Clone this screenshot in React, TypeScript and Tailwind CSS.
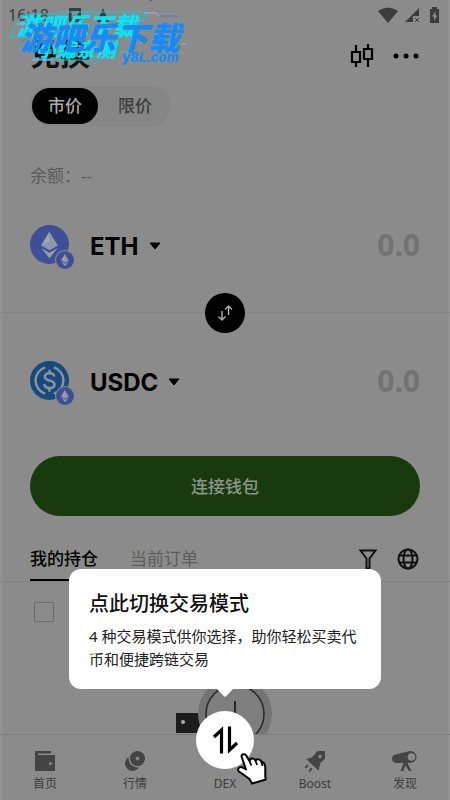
import { useState } from 'react'
import type { ReactNode } from 'react'

interface Token {
  symbol: string
  icon: ReactNode
}

interface NavItem {
  label: string
  icon: ReactNode
}

function EthIcon({ className }: { className?: string }) {
  return (
    <svg viewBox="0 0 40 40" className={className} aria-hidden="true">
      <circle cx="20" cy="20" r="20" fill="#3e4f97" />
      <path d="M20 7 11.5 21 20 26l8.500-5z" fill="#8f95ab" />
      <path d="M20 7v10.500L11.500 21z" fill="#a0a4b4" />
      <path d="m11.500 23.500 8.500 5 8.500-5L20 34z" fill="#969bb0" />
    </svg>
  )
}

function UsdcIcon({ className }: { className?: string }) {
  return (
    <svg viewBox="0 0 40 40" className={className} aria-hidden="true">
      <circle cx="20" cy="20" r="20" fill="#164a7d" />
      <g fill="none" stroke="#8f9499" strokeWidth="2.500">
        <path d="M15.500 6.500a14.200 14.200 0 0 0 0 27" />
        <path d="M24.500 6.500a14.200 14.200 0 0 1 0 27" />
        <path d="M25 16c-.4-2.300-2.400-3.500-5-3.500-3 0-4.800 1.500-4.800 3.700 0 5.300 10 2.500 10 7.800 0 2.300-2.300 3.700-5.200 3.700-3.100 0-5.200-1.400-5.400-4" />
        <path d="M20 9v4M20 27.500v4" />
      </g>
    </svg>
  )
}

const tokens: Token[] = [
  { symbol: 'ETH', icon: <EthIcon className="size-[39px]" /> },
  { symbol: 'USDC', icon: <UsdcIcon className="size-[39px]" /> },
]

const navItems: NavItem[] = [
  {
    label: '首页',
    icon: (
      <svg viewBox="0 0 24 24" className="size-6" fill="#444">
        <path d="M2 2h16v2.500H5V6h17v16H2z" />
        <circle cx="17.500" cy="14.500" r="1.500" fill="#8b8b8b" />
      </svg>
    ),
  },
  {
    label: '行情',
    icon: (
      <svg viewBox="0 0 24 24" className="size-6" fill="#444">
        <circle cx="9.500" cy="14.500" r="7.500" />
        <circle cx="14.500" cy="9.500" r="9" fill="#8b8b8b" />
        <circle cx="14.500" cy="9.500" r="7.500" />
        <path d="m14.500 7.300 2.200 2.200-2.200 2.200-2.200-2.200z" fill="#8b8b8b" />
      </svg>
    ),
  },
  { label: 'DEX', icon: <span className="block size-6" /> },
  {
    label: 'Boost',
    icon: (
      <svg viewBox="0 0 24 24" className="size-6" fill="#444">
        <path d="M14.500 2H22v7.500l-4.500 4.500-2 7.500L3 10l6-1.500z" />
        <circle cx="17" cy="7.500" r="1.700" fill="#8b8b8b" />
        <path d="m1.500 18.500 2.500-3 1.500 1.500-2.500 2.500zM5.500 22l2.500-3.500 1.500 1.500L7 23z" />
      </svg>
    ),
  },
  {
    label: '发现',
    icon: (
      <svg viewBox="0 0 26 24" className="h-6 w-[26px]" fill="#444">
        <path d="M3.500 5.500 17 2.300a5.900 5.900 0 1 1 2.500 11.500L4.500 14A4.300 4.300 0 0 1 3.500 5.500z" />
        <circle cx="19.500" cy="8" r="3.800" fill="#8b8b8b" />
        <path d="m12 13-3.500 9h2.800l2.200-5.500 3.500 5.500h2.500l-4.500-9z" />
      </svg>
    ),
  },
]

function StatusBar() {
  return (
    <div className="flex h-7 items-center px-1.5 pt-0.5 text-[#3c3c3c]">
      <span className="w-[60px] text-base">16:18</span>
      <svg viewBox="0 0 42 16" className="h-4 w-[42px]" fill="currentColor">
        <path d="M1 1h12v14H1zm2.500 3v8l2.500-4 2 4 3-8z" fillRule="evenodd" />
        <path d="M35 1 29 15h3.500l2.500-5 2.500 5H41z" />
      </svg>
      <div className="ml-auto flex items-center gap-1.5">
        <svg viewBox="0 0 20 16" className="h-4 w-5" fill="currentColor">
          <path d="M0 4Q10-3 20 4L10 16z" />
        </svg>
        <svg viewBox="0 0 16 16" className="size-4" fill="currentColor">
          <path d="M15 1v8H9v6H1z" />
          <path d="m11 11 4 4m0-4-4 4" stroke="currentColor" />
        </svg>
        <svg viewBox="0 0 16 18" className="h-[18px] w-4" fill="currentColor">
          <path d="M6 1h5v2h2v14H4V3h2zm3.500 4L6 10.500h2V15l3.500-5.500h-2z" fillRule="evenodd" />
        </svg>
      </div>
    </div>
  )
}

// Site stamp laid over the top left corner of the page
function SiteStamp() {
  return (
    <div className="pointer-events-none absolute left-0 top-0 h-20 w-[200px] font-black italic">
      <svg viewBox="0 0 200 80" className="absolute inset-0 h-20 w-[200px]" fill="none" strokeWidth="1">
        <path d="M17 19l5-5h34l3-2h87l-5 9h-5M17 19l-9 18h18l6 5v17h18M118 52h7l5-10-7-5M96 60l-3 4-4-4H40" stroke="#08cfe0" />
        <path d="M142 13h12l3 3M15 24h10M180 44h4M30 60h20" stroke="#b9a8f0" />
        <path d="M158 16h18M176 38l5-8M20 42l4-3" stroke="#5c6ad0" />
        <path d="M148 0h2" stroke="#222" />
      </svg>
      <span className="absolute left-[15px] top-3 whitespace-nowrap text-2xl/7 text-[#00e6fa]">游吧乐下载</span>
      <span className="absolute left-[34px] top-[38px] whitespace-nowrap text-xl/6 text-[#00e6fa]">小编亲测</span>
      <span className="absolute left-[18px] top-5 whitespace-nowrap text-[32px]/9 text-[#168bf6]">游吧乐下载</span>
      <span className="absolute left-[120px] top-[49px] font-['Inter'] text-[13px]/4 font-extrabold text-[#168df5]">y8L.com</span>
    </div>
  )
}

function TokenRow({ token, amount, onChange }: { token: Token; amount: string; onChange: (value: string) => void }) {
  return (
    <div className="flex h-[135px] items-center px-[30px]">
      <button type="button" className="flex items-center">
        <span className="relative mr-[21px] block size-[39px]">
          {token.icon}
          <span className="absolute -bottom-1.5 -right-1.5 rounded-full bg-[#8b8b8b] p-px">
            <EthIcon className="size-[18px]" />
          </span>
        </span>
        <span className="pt-1 font-['Inter'] text-2xl font-bold text-black">{token.symbol}</span>
        <svg viewBox="0 0 12 8" className="ml-2.5 mt-0.5 h-2 w-3">
          <path d="M1 1h10L6 7z" fill="#000" stroke="#000" strokeLinejoin="round" />
        </svg>
      </button>
      <input
        aria-label={`${token.symbol} 数量`}
        inputMode="decimal"
        placeholder="0.0"
        value={amount}
        onChange={(event) => onChange(event.target.value)}
        className="ml-auto w-0 min-w-0 flex-1 bg-transparent text-right font-['Noto_Sans'] text-3xl font-bold text-[#222] outline-none placeholder:text-[#737373]"
      />
    </div>
  )
}

function EmptyIllustration() {
  return (
    <svg viewBox="0 0 98 62" className="ml-[174px] h-[62px] w-[98px] shrink-0">
      <path d="M2 28h34v18H2z" fill="#1c1c1c" />
      <path d="M2 47h34" stroke="#1c1c1c" strokeWidth="2" />
      <circle cx="9" cy="37" r="2" fill="#aaa" />
      <circle cx="61" cy="29" r="37" fill="#747474" />
      <circle cx="61" cy="29" r="29" fill="#7e7e7e" stroke="#282828" strokeWidth="1.500" />
      <path d="M61 16v14" stroke="#282828" strokeWidth="2" />
    </svg>
  )
}

export default function App() {
  const [mode, setMode] = useState('市价')
  const [activeTab, setActiveTab] = useState('我的持仓')
  const [amounts, setAmounts] = useState(['', ''])

  const setAmount = (index: number, value: string) => {
    setAmounts(amounts.map((amount, i) => (i === index ? value : amount)))
  }

  return (
    <div className="relative flex min-h-screen flex-col border-x-2 border-[#929292] bg-[#8b8b8b] font-['Noto_Sans','Noto_Sans_CJK_SC',sans-serif] text-[17px]/6">
      <StatusBar />

      <header className="flex h-14 items-center justify-between px-7">
        <h1 className="pb-1 text-3xl font-bold text-[#111]">兑换</h1>
        <div className="flex items-center gap-[18px]">
          <button type="button" aria-label="K线">
            <svg viewBox="0 0 24 26" className="h-[26px] w-6" fill="none" stroke="#000" strokeWidth="2.200">
              <path d="M2 9h8v10H2zM14 6h8v10h-8zM6 2v7M6 19v5M18 1v5M18 16v8" />
            </svg>
          </button>
          <button type="button" aria-label="更多">
            <svg viewBox="0 0 28 8" className="h-2 w-7">
              <circle cx="4" cy="4" r="2.500" />
              <circle cx="14" cy="4" r="2.500" />
              <circle cx="24" cy="4" r="2.500" />
            </svg>
          </button>
        </div>
      </header>

      <div className="mx-7 mt-0.5 flex h-10 w-[140px] items-center self-start rounded-full bg-[#868686] px-0.5">
        {['市价', '限价'].map((item) => (
          <button
            key={item}
            type="button"
            onClick={() => setMode(item)}
            className={
              mode === item
                ? 'h-9 w-[66px] rounded-full bg-black font-medium text-[#aaa]'
                : 'h-9 flex-1 rounded-full pl-1 font-medium text-[#3c3c3c]'
            }
          >
            {item}
          </button>
        ))}
      </div>

      <p className="mx-7 mt-[38px] text-[#5c5c5c]">余额：--</p>

      <section className="relative -mx-0.5 -mt-[11px]">
        <TokenRow token={tokens[0]} amount={amounts[0]} onChange={(value) => setAmount(0, value)} />
        <div className="h-px bg-[#848484]" />
        <TokenRow token={tokens[1]} amount={amounts[1]} onChange={(value) => setAmount(1, value)} />
        <button
          type="button"
          aria-label="交换代币"
          className="absolute left-1/2 top-1/2 flex size-10 -translate-x-1/2 -translate-y-1/2 items-center justify-center rounded-full bg-black"
        >
          <svg viewBox="0 0 18 18" className="size-[18px]" fill="none" stroke="#aaa" strokeWidth="1.500">
            <path d="M6 7v9M2.500 12.500 6 16l3.500-3.500M12.500 11V2M9 5.500 12.500 2 16 5.500" />
          </svg>
        </button>
      </section>

      <button type="button" className="mx-7 mt-2 h-[60px] rounded-full bg-[#193a0f] pt-0.5 font-medium text-[#8d968a]">
        连接钱包
      </button>

      <div className="-mx-0.5 mt-5 flex h-[46px] items-stretch border-b border-[#818181] px-[30px]">
        <div role="tablist" className="flex gap-[30px]">
          {['我的持仓', '当前订单'].map((tab) => (
            <button
              key={tab}
              type="button"
              role="tab"
              aria-selected={activeTab === tab}
              onClick={() => setActiveTab(tab)}
              className={
                activeTab === tab
                  ? 'w-[70px] whitespace-nowrap border-b-2 border-black pt-0.5 text-left font-medium text-black'
                  : 'w-[70px] whitespace-nowrap border-b-2 border-transparent pt-0.5 text-left text-[#5c5c5c]'
              }
            >
              {tab}
            </button>
          ))}
        </div>
        <div className="ml-auto flex items-center gap-[18px]">
          <button type="button" aria-label="筛选">
            <svg viewBox="0 0 20 22" className="h-[22px] w-5" fill="none" stroke="#111" strokeWidth="2">
              <path d="M2.500 2.500h15L11.500 10.500V20l-3 1V10.500z" />
            </svg>
          </button>
          <button type="button" aria-label="网络">
            <svg viewBox="0 0 24 24" className="size-6" fill="none" stroke="#111" strokeWidth="2">
              <circle cx="12" cy="12" r="9.500" />
              <ellipse cx="12" cy="12" rx="4.500" ry="9.500" />
              <path d="M3.500 8.500h17M3.500 15.500h17" />
            </svg>
          </button>
        </div>
      </div>

      <main className="-mx-0.5 flex flex-1 flex-col overflow-hidden">
        <label className="ml-[34px] mt-5 flex">
          <input
            type="checkbox"
            aria-label="隐藏小额资产"
            className="size-5 appearance-none rounded-[2px] border border-[#6c6c6c] checked:bg-black"
          />
        </label>
        <div className="mt-auto flex h-[49px] items-start overflow-hidden">
          <EmptyIllustration />
        </div>
      </main>

      <nav className="-mx-0.5 grid h-[66px] grid-cols-5 border-t border-[#7d7d7d] pt-3.5">
        {navItems.map((item) => (
          <a key={item.label} href="#" className="flex flex-col items-center gap-px text-xs/5 text-[#3c3c3c]">
            {item.icon}
            {item.label}
          </a>
        ))}
      </nav>

      {/* guide bubble over the holdings list */}
      <div role="dialog" aria-labelledby="guide-title" className="absolute inset-x-[67px] bottom-[111px] h-[120px] rounded-xl bg-white px-5 py-[21px]">
        <h2 id="guide-title" className="text-xl/7 font-medium text-[#111]">
          点此切换交易模式
        </h2>
        <p className="mt-[7px] text-[15px]/[23px] text-[#222]">4 种交易模式供你选择，助你轻松买卖代币和便捷跨链交易</p>
        <svg viewBox="0 0 16 8" className="absolute left-1/2 top-full h-2 w-4 -translate-x-1/2">
          <path d="M0 0h16L9 7.300q-1 .9-2 0z" fill="#fff" />
        </svg>
      </div>

      <button
        type="button"
        aria-label="切换交易模式"
        className="absolute bottom-[31px] left-1/2 flex size-[58px] -translate-x-1/2 items-center justify-center rounded-full bg-white"
      >
        <svg viewBox="0 0 28 28" className="size-7" fill="none" stroke="#000" strokeWidth="3.200">
          <path d="M10.500 27.500V4L3 11M18.500 .5V24L26 17" />
        </svg>
        <svg viewBox="0 0 32 34" className="absolute left-[39px] top-[40px] h-[34px] w-8">
          <path
            d="M6.500 5.500c0-3 4-3 5-.5l3 5c.5-3 4.500-3.500 6-.5 1.500-2 5-1.500 6 1.500 2-.5 3.500 2 3.800 5v10l.5 2.500L17 32.500 14.500 28 4 20.500c-2.500-2 .5-5.500 3.500-4l3.500 2z"
            fill="#fff"
            stroke="#000"
            strokeWidth="2"
            strokeLinejoin="round"
          />
          <path d="m14.500 10 1.800 4.500M20.500 9.500l1.500 4.500M26.500 11l1 4" stroke="#000" strokeWidth="1.800" />
        </svg>
      </button>

      <SiteStamp />
    </div>
  )
}
